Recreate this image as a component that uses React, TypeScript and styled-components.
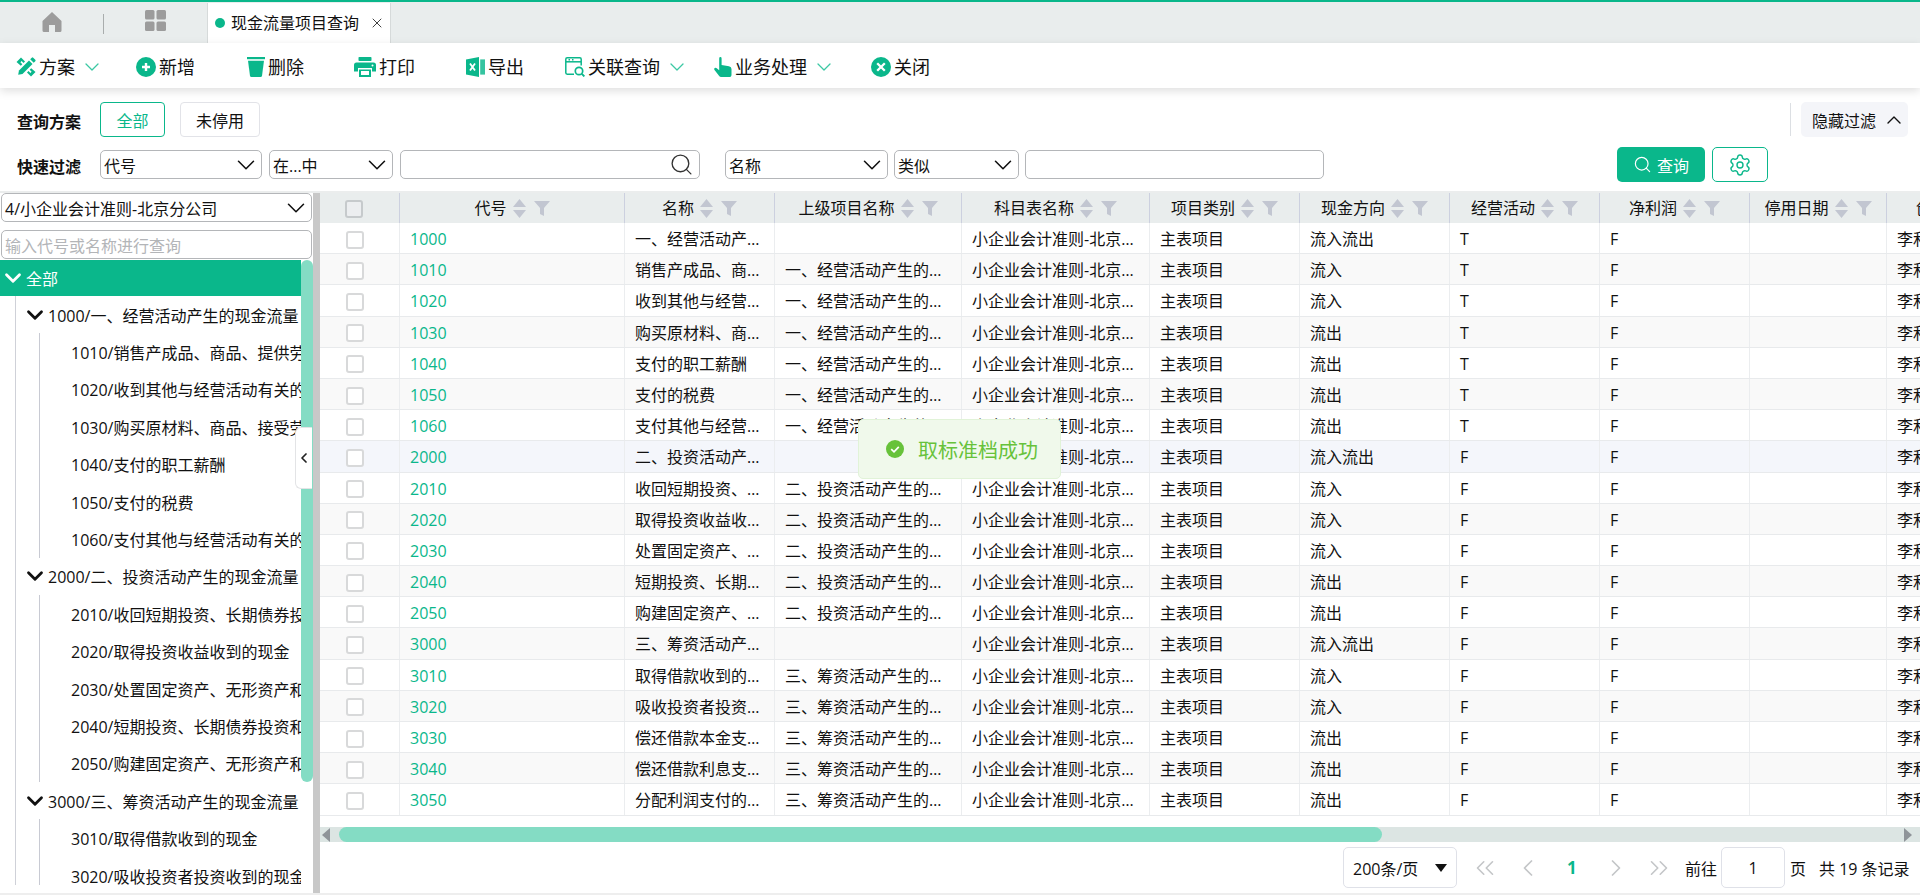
import React from "react";
import styled, { createGlobalStyle } from "styled-components";
import { ChevronDown, ChevronUp, ChevronLeft, ChevronRight, ChevronsLeft, ChevronsRight, Search, Settings, X } from "lucide-react";

const GREEN = "#0ab78b";
const THUMB = "#84dcc4";

const Global = createGlobalStyle`
  html, body { margin: 0; padding: 0; width: 1920px; height: 895px; overflow: hidden; background: #fff; }
  body { font-family: "Open Sans", "Noto Sans CJK SC", sans-serif; font-size: 16px; color: #111; }
  * { box-sizing: border-box; }
`;

const Page = styled.div`
  width: 1920px;
  height: 895px;
  display: flex;
  flex-direction: column;
  position: relative;
  overflow: hidden;
`;

/* ---------- tab bar ---------- */
const TabBar = styled.div`
  height: 43px;
  flex: none;
  background: #e9eded;
  border-top: 2px solid ${GREEN};
  display: flex;
  align-items: flex-end;
  padding-left: 42px;
`;
const TabIcon = styled.div<{ $lift?: number }>`
  height: 41px;
  display: flex;
  align-items: center;
  padding-bottom: ${(p) => p.$lift ?? 2}px;
`;
const TabDivider = styled.div`
  width: 1px;
  height: 20px;
  background: #a9adad;
  margin: 0 41px 9px 41px;
`;
const ActiveTab = styled.div`
  margin-left: 41px;
  width: 184px;
  height: 40px;
  background: #fff;
  border-left: 1px solid #d6dada;
  border-right: 1px solid #d6dada;
  display: flex;
  align-items: center;
  padding-left: 7px;
  font-size: 16px;
  line-height: 20px;
`;
const TabDot = styled.span`
  width: 10px;
  height: 10px;
  border-radius: 50%;
  background: ${GREEN};
  margin-right: 6px;
  flex: none;
`;
const TabClose = styled.span`
  display: flex;
  margin-left: 10px;
  color: #333;
`;

/* ---------- toolbar ---------- */
const Toolbar = styled.div`
  height: 45px;
  flex: none;
  background: #fff;
  display: flex;
  align-items: center;
  padding: 2px 0 0 16px;
  box-shadow: 0 3px 9px rgba(0, 0, 0, 0.13);
  position: relative;
  z-index: 1;
`;
const ToolItem = styled.div<{ $w: number }>`
  width: ${(p) => p.$w}px;
  flex: none;
  display: flex;
  align-items: center;
  font-size: 18px;
  line-height: 24px;
  gap: 3px;
`;
const ToolCaret = styled.span`
  display: flex;
  color: #3cc8a4;
  margin-left: 2px;
`;

/* ---------- filter area ---------- */
const FilterPanel = styled.div`
  height: 103px;
  flex: none;
  padding: 14px 12px 0 17px;
  background: #fff;
`;
const QueryRow = styled.div`
  height: 35px;
  display: flex;
  align-items: center;
`;
const FastRow = styled.div`
  height: 35px;
  margin-top: 10px;
  display: flex;
  align-items: center;
`;
const RowLabel = styled.div`
  width: 83px;
  flex: none;
  font-weight: 700;
  font-size: 16px;
  line-height: 20px;
  padding-top: 5px;
`;
const PlanButton = styled.div<{ $active?: boolean; $w: number }>`
  width: ${(p) => p.$w}px;
  height: 35px;
  margin-right: 15px;
  display: flex;
  align-items: center;
  justify-content: center;
  font-size: 16px;
  border-radius: 4px;
  border: 1px solid ${(p) => (p.$active ? GREEN : "#e2e3e8")};
  color: ${(p) => (p.$active ? GREEN : "#111")};
`;
const HideWrap = styled.div`
  margin-left: auto;
  display: flex;
  align-items: center;
`;
const VBar = styled.div`
  width: 1px;
  height: 33px;
  background: #dcdfe3;
  margin-right: 10px;
`;
const HideButton = styled.div`
  width: 107px;
  height: 35px;
  background: #f4f5f9;
  border-radius: 5px;
  display: flex;
  align-items: center;
  padding-left: 11px;
  gap: 6px;
  font-size: 16px;
`;
const SelectBox = styled.div<{ $w: number; $gap: number }>`
  width: ${(p) => p.$w}px;
  height: 29px;
  flex: none;
  margin-right: ${(p) => p.$gap}px;
  border: 1.5px solid #b4b6b9;
  border-radius: 5px;
  background: #fff;
  display: flex;
  align-items: center;
  justify-content: space-between;
  padding: 0 0 0 3px;
  font-size: 16px;
  color: #111;
  white-space: nowrap;
  overflow: hidden;
`;
const TextInput = styled.div<{ $w: number; $gap: number }>`
  width: ${(p) => p.$w}px;
  height: 29px;
  flex: none;
  margin-right: ${(p) => p.$gap}px;
  border: 1.5px solid #b4b6b9;
  border-radius: 5px;
  background: #fff;
  display: flex;
  align-items: center;
  justify-content: flex-end;
  padding-right: 5px;
  color: #333;
`;
const QueryButton = styled.div`
  margin-left: 293px;
  width: 88px;
  height: 35px;
  background: ${GREEN};
  color: #fff;
  border-radius: 5px;
  display: flex;
  align-items: center;
  justify-content: center;
  gap: 5px;
  font-size: 16px;
`;
const GearButton = styled.div`
  margin-left: 7px;
  width: 56px;
  height: 35px;
  border: 1px solid ${GREEN};
  border-radius: 5px;
  color: ${GREEN};
  display: flex;
  align-items: center;
  justify-content: center;
`;

/* ---------- main ---------- */
const Main = styled.div`
  height: 704px;
  flex: none;
  display: flex;
  border-top: 2px solid #ebeded;
  border-bottom: 2px solid #eeeeee;
`;
const LeftPanel = styled.div`
  width: 313px;
  flex: none;
  display: flex;
  flex-direction: column;
`;
const LeftSelect = styled(SelectBox)`
  margin: 0 1px;
  width: 311px;
  height: 29px;
`;
const LeftInput = styled.div`
  margin: 8px 1px 1px;
  width: 311px;
  height: 29px;
  flex: none;
  border: 1.5px solid #b4b6b9;
  border-radius: 5px;
  color: #b3b5b8;
  padding-left: 3px;
  display: flex;
  align-items: center;
  font-size: 16px;
`;
const TreeArea = styled.div`
  height: 625px;
  flex: none;
  display: flex;
  position: relative;
`;
const TreeScroll = styled.div`
  width: 301px;
  height: 100%;
  overflow: hidden;
  flex: none;
`;
const TreeBar = styled.div`
  width: 12px;
  flex: none;
`;
const TreeThumb = styled.div`
  height: 522px;
  background: ${THUMB};
  border-radius: 6px;
`;
const TreeRoot = styled.div`
  height: 36px;
  background: ${GREEN};
  color: #fff;
  display: flex;
  align-items: center;
  font-size: 16px;
`;
const TreeGuide = styled.div`
  margin-left: 15px;
  border-left: 1px solid #cfd1d8;
`;
const TreeChildren = styled.div`
  margin-left: 23px;
  border-left: 1px solid #c8cad3;
`;
const TreeNode = styled.div<{ $child?: boolean }>`
  height: 37.4px;
  display: flex;
  align-items: center;
  white-space: nowrap;
  font-size: 16px;
  padding-left: ${(p) => (p.$child ? "31px" : "6px")};
`;
const NodeCaret = styled.span`
  display: flex;
  flex: none;
`;
const Collapse = styled.div`
  position: absolute;
  top: 167px;
  left: 295px;
  width: 17px;
  height: 62px;
  background: #fff;
  border: 1px solid #e3e4e6;
  border-right: none;
  border-radius: 6px 0 0 6px;
  display: flex;
  align-items: center;
  justify-content: center;
  color: #222;
`;
const Splitter = styled.div`
  width: 7px;
  flex: none;
  background: #c8c8c8;
`;

const RightPanel = styled.div`
  width: 1600px;
  flex: none;
  display: flex;
  flex-direction: column;
`;
const TableWrap = styled.div`
  height: 634px;
  flex: none;
  overflow: hidden;
`;
const COLS = "80px 225px 150px 187px 188px 150px 150px 150px 150px 137px 150px";
const HeadRow = styled.div`
  width: 1717px;
  height: 30px;
  display: grid;
  grid-template-columns: ${COLS};
  background: #e9eded;
`;
const HeadCell = styled.div`
  display: flex;
  align-items: center;
  justify-content: center;
  border-right: 1px solid #ccd0df;
  font-size: 16px;
  line-height: 20px;
  white-space: nowrap;
  overflow: hidden;
`;
const HeadCheckCell = styled(HeadCell)`
  justify-content: flex-start;
  padding: 1px 0 0 25px;
`;
const HeadIcons = styled.span`
  display: flex;
  align-items: center;
  margin-left: 6px;
  gap: 8px;
`;
const Row = styled.div<{ $bg: string }>`
  width: 1717px;
  height: 31.2px;
  display: grid;
  grid-template-columns: ${COLS};
  background: ${(p) => p.$bg};
  border-bottom: 1px solid #e8eaec;
`;
const Cell = styled.div`
  border-right: 1px solid #ebedef;
  padding: 3px 10px 0;
  font-size: 16px;
  line-height: 27px;
  white-space: nowrap;
  overflow: hidden;
  text-overflow: ellipsis;
`;
const CodeCell = styled(Cell)`
  color: #0ab78b;
`;
const CheckCell = styled(Cell)`
  display: flex;
  align-items: center;
  padding: 3px 0 0 26px;
`;
const CheckBox = styled.span<{ $head?: boolean }>`
  width: 18px;
  height: 18px;
  display: block;
  background: ${(p) => (p.$head ? "#eceef0" : "#fff")};
  border: 2px solid ${(p) => (p.$head ? "#c6cacc" : "#d8d9da")};
  border-radius: 3px;
`;

const HScroll = styled.div`
  height: 15px;
  flex: none;
  background: #dce5e3;
  display: flex;
  align-items: center;
  padding: 0 8px 0 2px;
  color: #8f9499;
`;
const HThumb = styled.div`
  width: 1043px;
  height: 15px;
  margin-left: 9px;
  background: ${THUMB};
  border-radius: 8px;
`;
const HArrowEnd = styled.span`
  margin-left: auto;
  display: flex;
`;
const Pagination = styled.div`
  height: 51px;
  flex: none;
  display: flex;
  align-items: center;
  justify-content: flex-end;
  padding-right: 8px;
  font-size: 16px;
`;
const SizeSelect = styled.div`
  width: 114px;
  height: 41px;
  border: 1px solid #dfe1e8;
  border-radius: 5px;
  display: flex;
  align-items: center;
  justify-content: space-between;
  padding: 0 9px 0 9px;
  margin-right: 6px;
`;
const PageBtn = styled.div<{ $on?: boolean }>`
  width: 43.6px;
  height: 41px;
  display: flex;
  align-items: center;
  justify-content: center;
  color: ${(p) => (p.$on ? "#0ab78b" : "#c4c6c8")};
  font-weight: 700;
  font-size: 17px;
`;
const Jump = styled.div`
  width: 64px;
  height: 41px;
  margin: 0 5px 0 4px;
  border: 1px solid #dfe1e8;
  border-radius: 5px;
  display: flex;
  align-items: center;
  justify-content: center;
`;
const GoLabel = styled.span`
  margin-left: 4px;
`;
const Total = styled.span`
  margin-left: 13px;
  width: 93px;
  white-space: nowrap;
  display: flex;
  justify-content: space-between;
`;

const Toast = styled.div`
  position: absolute;
  left: 858px;
  top: 419px;
  width: 203px;
  height: 60px;
  background: #f0f9eb;
  border: 1px solid #e1f3d8;
  border-radius: 5px;
  display: flex;
  align-items: center;
  padding-left: 27px;
  gap: 14px;
  color: #67c23a;
  font-size: 20px;
  z-index: 5;
`;

/* ---------- drawings ---------- */
const HomeIcon = () => (
  <svg width="20" height="20" viewBox="0 0 20 20" fill="#9c9c9c">
    <path d="M10 0 L19.5 9 V18.5 Q19.5 20 18 20 H13 V13 H7 V20 H2 Q0.5 20 0.5 18.5 V9 Z" />
  </svg>
);
const GridIcon = () => (
  <svg width="21" height="21" viewBox="0 0 21 21" fill="#9c9c9c">
    <rect x="0" y="0" width="9.5" height="9.5" rx="1.5" />
    <rect x="11.5" y="0" width="9.5" height="9.5" rx="1.5" />
    <rect x="0" y="11.5" width="9.5" height="9.5" rx="1.5" />
    <rect x="11.5" y="11.5" width="9.5" height="9.5" rx="1.5" />
  </svg>
);
const PlanIcon = () => (
  <svg width="20" height="20" viewBox="0 0 20 20" fill={GREEN}>
    <path d="M0.5 5 L5 0.5 L9 4.5 L7.5 6 L5.6 4.1 L4.4 5.3 L6.3 7.2 L4.8 8.7 Z" />
    <path d="M19.5 15 L15 19.5 L11 15.5 L12.5 14 L14.4 15.9 L15.6 14.7 L13.7 12.8 L15.2 11.3 Z" />
    <path d="M3 13.5 L13 3.5 L16.5 7 L6.5 17 L2.2 17.8 Z" />
    <path d="M14.2 2.3 L15.8 0.7 Q16.5 0 17.2 0.7 L19.3 2.8 Q20 3.5 19.3 4.2 L17.7 5.8 Z" />
  </svg>
);
const PlusIcon = () => (
  <svg width="20" height="20" viewBox="0 0 20 20">
    <circle cx="10" cy="10" r="10" fill={GREEN} />
    <path d="M10 6 V14 M6 10 H14" stroke="#fff" strokeWidth="2.4" />
  </svg>
);
const TrashIcon = () => (
  <svg width="18" height="20" viewBox="0 0 18 20" fill={GREEN}>
    <rect x="0" y="0" width="18" height="2.2" />
    <path d="M1 3.8 H17 L15 18.8 Q14.8 20 13.6 20 H4.4 Q3.2 20 3 18.8 Z" />
  </svg>
);
const PrintIcon = () => (
  <svg width="22" height="20" viewBox="0 0 22 20" fill={GREEN}>
    <rect x="4.5" y="0" width="13" height="4" rx="0.8" />
    <path d="M2.5 5.5 H19.5 Q22 5.5 22 8 V14.5 H18 V11 H4 V14.5 H0 V8 Q0 5.5 2.5 5.5 Z" />
    <path d="M5 12.5 H17 V20 H5 Z" />
    <rect x="7" y="14" width="8" height="4" fill="#fff" />
    <circle cx="18.5" cy="8.5" r="1" fill="#fff" />
  </svg>
);
const ExcelIcon = () => (
  <svg width="19" height="20" viewBox="0 0 19 20">
    <path d="M0 2.4 L13 0 V20 L0 17.6 Z" fill={GREEN} />
    <rect x="14.2" y="2.4" width="4.8" height="15.2" fill="#35c4a0" />
    <path d="M4 6.5 L9 13.5 M9 6.5 L4 13.5" stroke="#fff" strokeWidth="1.8" />
  </svg>
);
const ViewIcon = () => (
  <svg width="20" height="20" viewBox="0 0 20 20" fill="none" stroke={GREEN} strokeWidth="1.5">
    <path d="M9 17.2 H2.2 Q0.8 17.2 0.8 15.8 V2.2 Q0.8 0.8 2.2 0.8 H14.8 Q16.2 0.8 16.2 2.2 V8.5" />
    <path d="M1 4.8 H16" />
    <path d="M3.5 2.8 H5 M7 2.8 H8.5" />
    <circle cx="14" cy="14" r="3.7" strokeWidth="1.7" />
    <path d="M16.8 16.8 L19.4 19.4" strokeWidth="1.9" />
  </svg>
);
const HandIcon = () => (
  <svg width="18" height="20" viewBox="0 0 18 20" fill={GREEN}>
    <path d="M5.2 1.4 Q5.2 0 6.4 0 Q7.6 0 7.6 1.4 V8 L15 9.2 Q17.5 9.8 17.5 12 V17.4 Q17.5 20 15 20 H7.2 Q5.8 20 5 18.8 L0.5 13 Q-0.2 11.9 0.7 11.1 Q1.7 10.4 2.7 11.2 L5.2 13.3 Z" />
  </svg>
);
const CloseIcon = () => (
  <svg width="20" height="20" viewBox="0 0 20 20">
    <circle cx="10" cy="10" r="10" fill={GREEN} />
    <path d="M6.2 6.2 L13.8 13.8 M13.8 6.2 L6.2 13.8" stroke="#fff" strokeWidth="2.3" />
  </svg>
);
const SortIcon = () => (
  <svg width="13" height="19" viewBox="0 0 13 19" fill="#c2c6d1">
    <path d="M6.5 0 L13 8 H0 Z" />
    <path d="M0 11 H13 L6.5 19 Z" />
  </svg>
);
const FunnelIcon = () => (
  <svg width="16" height="15" viewBox="0 0 16 15" fill="#c2c6d1">
    <path d="M0 0 H16 L10 7 V15 L6 13 V7 Z" />
  </svg>
);
const SuccessIcon = () => (
  <svg width="18" height="18" viewBox="0 0 18 18">
    <circle cx="9" cy="9" r="9" fill="#67c23a" />
    <path d="M5.2 9.2 L8 11.8 L12.8 6.8" stroke="#fff" strokeWidth="1.7" fill="none" />
  </svg>
);
const Tri = ({ dir }: { dir: "l" | "r" }) => (
  <svg width="8" height="14" viewBox="0 0 8 14" fill="#8f9499">
    {dir === "l" ? <path d="M8 0 V14 L0 7 Z" /> : <path d="M0 0 V14 L8 7 Z" />}
  </svg>
);
const Caret = () => (
  <svg width="12" height="8" viewBox="0 0 12 8" fill="#111">
    <path d="M0 0 H12 L6 8 Z" />
  </svg>
);
const SelectChevron = () => <ChevronDown size={30} strokeWidth={1.25} />;
const ToolChevron = () => (
  <ToolCaret><ChevronDown size={24} strokeWidth={1.3} /></ToolCaret>
);

/* ---------- data ---------- */
const P1 = "一、经营活动产生的现金流量";
const P2 = "二、投资活动产生的现金流量";
const P3 = "三、筹资活动产生的现金流量";
type Item = { code: string; name: string; parent: string; dir: string; a: string };
const rows: Item[] = [
  { code: "1000", name: P1, parent: "", dir: "流入流出", a: "T" },
  { code: "1010", name: "销售产成品、商品、提供劳务收到的现金", parent: P1, dir: "流入", a: "T" },
  { code: "1020", name: "收到其他与经营活动有关的现金", parent: P1, dir: "流入", a: "T" },
  { code: "1030", name: "购买原材料、商品、接受劳务支付的现金", parent: P1, dir: "流出", a: "T" },
  { code: "1040", name: "支付的职工薪酬", parent: P1, dir: "流出", a: "T" },
  { code: "1050", name: "支付的税费", parent: P1, dir: "流出", a: "T" },
  { code: "1060", name: "支付其他与经营活动有关的现金", parent: P1, dir: "流出", a: "T" },
  { code: "2000", name: P2, parent: "", dir: "流入流出", a: "F" },
  { code: "2010", name: "收回短期投资、长期债券投资和长期股权投资收到的现金", parent: P2, dir: "流入", a: "F" },
  { code: "2020", name: "取得投资收益收到的现金", parent: P2, dir: "流入", a: "F" },
  { code: "2030", name: "处置固定资产、无形资产和其他非流动资产收回的现金净额", parent: P2, dir: "流入", a: "F" },
  { code: "2040", name: "短期投资、长期债券投资和长期股权投资支付的现金", parent: P2, dir: "流出", a: "F" },
  { code: "2050", name: "购建固定资产、无形资产和其他非流动资产支付的现金", parent: P2, dir: "流出", a: "F" },
  { code: "3000", name: P3, parent: "", dir: "流入流出", a: "F" },
  { code: "3010", name: "取得借款收到的现金", parent: P3, dir: "流入", a: "F" },
  { code: "3020", name: "吸收投资者投资收到的现金", parent: P3, dir: "流入", a: "F" },
  { code: "3030", name: "偿还借款本金支付的现金", parent: P3, dir: "流出", a: "F" },
  { code: "3040", name: "偿还借款利息支付的现金", parent: P3, dir: "流出", a: "F" },
  { code: "3050", name: "分配利润支付的现金", parent: P3, dir: "流出", a: "F" },
];
const headers = ["代号", "名称", "上级项目名称", "科目表名称", "项目类别", "现金方向", "经营活动", "净利润", "停用日期", "创建人"];
const groups = ["1000", "2000", "3000"].map((c) => ({
  parent: rows.find((r) => r.code === c)!,
  kids: rows.filter((r) => r.code[0] === c[0] && r.code !== c),
}));
const rowBg = (i: number) => (i === 7 ? "#f4f6fb" : i % 2 === 0 ? "#ffffff" : "#f9f9f9");

export default function App() {
  return (
    <Page>
      <Global />
      <TabBar>
        <TabIcon><HomeIcon /></TabIcon>
        <TabDivider />
        <TabIcon $lift={4}><GridIcon /></TabIcon>
        <ActiveTab>
          <TabDot />
          现金流量项目查询
          <TabClose><X size={16} strokeWidth={1.4} /></TabClose>
        </ActiveTab>
      </TabBar>

      <Toolbar>
        <ToolItem $w={120}><PlanIcon />方案<ToolChevron /></ToolItem>
        <ToolItem $w={111}><PlusIcon />新增</ToolItem>
        <ToolItem $w={107}><TrashIcon />删除</ToolItem>
        <ToolItem $w={112}><PrintIcon />打印</ToolItem>
        <ToolItem $w={99}><ExcelIcon />导出</ToolItem>
        <ToolItem $w={149}><ViewIcon />关联查询<ToolChevron /></ToolItem>
        <ToolItem $w={157}><HandIcon />业务处理<ToolChevron /></ToolItem>
        <ToolItem $w={70}><CloseIcon />关闭</ToolItem>
      </Toolbar>

      <FilterPanel>
        <QueryRow>
          <RowLabel>查询方案</RowLabel>
          <PlanButton $active $w={65}>全部</PlanButton>
          <PlanButton $w={80}>未停用</PlanButton>
          <HideWrap>
            <VBar />
            <HideButton>隐藏过滤<ChevronUp size={24} strokeWidth={1.4} /></HideButton>
          </HideWrap>
        </QueryRow>
        <FastRow>
          <RowLabel>快速过滤</RowLabel>
          <SelectBox $w={162} $gap={7}>代号<SelectChevron /></SelectBox>
          <SelectBox $w={124} $gap={7}>在...中<SelectChevron /></SelectBox>
          <TextInput $w={300} $gap={25}><Search size={25} strokeWidth={1.3} /></TextInput>
          <SelectBox $w={163} $gap={6}>名称<SelectChevron /></SelectBox>
          <SelectBox $w={125} $gap={6}>类似<SelectChevron /></SelectBox>
          <TextInput $w={299} $gap={0} />
          <QueryButton><Search size={19} strokeWidth={1.5} />查询</QueryButton>
          <GearButton><Settings size={24} strokeWidth={1.4} /></GearButton>
        </FastRow>
      </FilterPanel>

      <Main>
        <LeftPanel>
          <LeftSelect $w={311} $gap={0}>4/小企业会计准则-北京分公司<SelectChevron /></LeftSelect>
          <LeftInput>输入代号或名称进行查询</LeftInput>
          <TreeArea>
            <TreeScroll>
              <TreeRoot><NodeCaret><ChevronDown size={26} strokeWidth={2.6} /></NodeCaret>全部</TreeRoot>
              <TreeGuide>
                {groups.map((g) => (
                  <React.Fragment key={g.parent.code}>
                    <TreeNode>
                      <NodeCaret><ChevronDown size={26} strokeWidth={2.6} /></NodeCaret>
                      {g.parent.code}/{g.parent.name}
                    </TreeNode>
                    <TreeChildren>
                      {g.kids.map((k) => (
                        <TreeNode $child key={k.code}>{k.code}/{k.name}</TreeNode>
                      ))}
                    </TreeChildren>
                  </React.Fragment>
                ))}
              </TreeGuide>
            </TreeScroll>
            <TreeBar><TreeThumb /></TreeBar>
            <Collapse><ChevronLeft size={30} strokeWidth={2.6} /></Collapse>
          </TreeArea>
        </LeftPanel>
        <Splitter />
        <RightPanel>
          <TableWrap>
            <HeadRow>
              <HeadCheckCell><CheckBox $head /></HeadCheckCell>
              {headers.map((h) => (
                <HeadCell key={h}>
                  {h}
                  <HeadIcons><SortIcon /><FunnelIcon /></HeadIcons>
                </HeadCell>
              ))}
            </HeadRow>
            {rows.map((r, i) => (
              <Row key={r.code} $bg={rowBg(i)}>
                <CheckCell><CheckBox /></CheckCell>
                <CodeCell>{r.code}</CodeCell>
                <Cell>{r.name}</Cell>
                <Cell>{r.parent}</Cell>
                <Cell>小企业会计准则-北京分公司</Cell>
                <Cell>主表项目</Cell>
                <Cell>{r.dir}</Cell>
                <Cell>{r.a}</Cell>
                <Cell>F</Cell>
                <Cell></Cell>
                <Cell>李和</Cell>
              </Row>
            ))}
          </TableWrap>
          <HScroll>
            <Tri dir="l" />
            <HThumb />
            <HArrowEnd><Tri dir="r" /></HArrowEnd>
          </HScroll>
          <Pagination>
            <SizeSelect>200条/页<Caret /></SizeSelect>
            <PageBtn><ChevronsLeft size={30} strokeWidth={1.3} /></PageBtn>
            <PageBtn><ChevronLeft size={28} strokeWidth={1.5} /></PageBtn>
            <PageBtn $on>1</PageBtn>
            <PageBtn><ChevronRight size={28} strokeWidth={1.5} /></PageBtn>
            <PageBtn><ChevronsRight size={30} strokeWidth={1.3} /></PageBtn>
            <GoLabel>前往</GoLabel>
            <Jump>1</Jump>
            <span>页</span>
            <Total>共 19 条记录</Total>
          </Pagination>
        </RightPanel>
      </Main>

      <Toast><SuccessIcon />取标准档成功</Toast>
    </Page>
  );
}
